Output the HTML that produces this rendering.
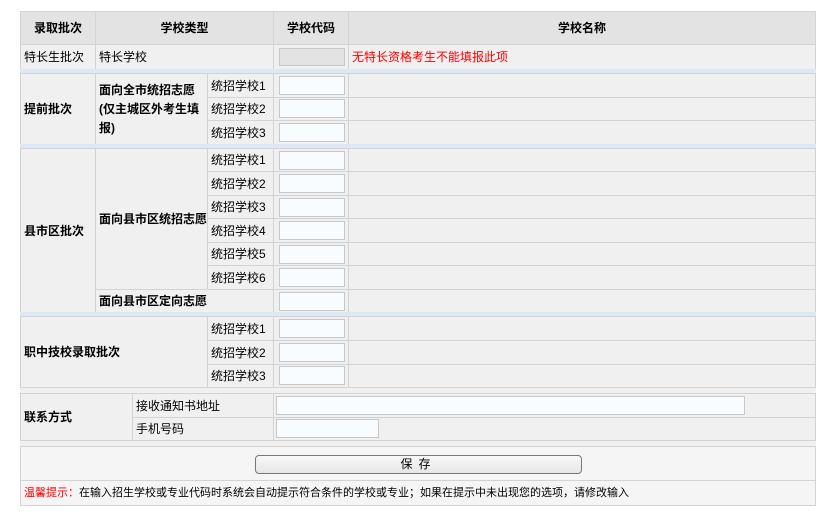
<!DOCTYPE html>
<html><head><meta charset="utf-8"><style>
body{margin:0;width:828px;height:513px;background:#fff;position:relative;overflow:hidden;font-family:"Liberation Sans","Microsoft YaHei","Noto Sans CJK SC",sans-serif;font-size:12px;color:#000}
.c{position:absolute;box-sizing:border-box;border:1px solid #d3d3d3;background:#f0f0f0;display:flex;align-items:center;padding-left:3px;line-height:18px}
.h{background:#e3e3e3;justify-content:center;padding:0;font-weight:bold}
.b{font-weight:bold}
.s{position:absolute;left:20px;width:796px;height:4px;background:#dde8f4}
.i{position:absolute;box-sizing:border-box;border:1px solid #c8c8c8;background:#f9fcff;height:19px}
</style></head><body>
<div class="c h" style="left:20px;top:11px;width:76px;height:34px">录取批次</div>
<div class="c h" style="left:95px;top:11px;width:179px;height:34px">学校类型</div>
<div class="c h" style="left:273px;top:11px;width:76px;height:34px">学校代码</div>
<div class="c h" style="left:348px;top:11px;width:468px;height:34px">学校名称</div>

<div class="c" style="left:20px;top:44px;width:76px;height:26px">特长生批次</div>
<div class="c" style="left:95px;top:44px;width:179px;height:26px">特长学校</div>
<div class="c" style="left:273px;top:44px;width:76px;height:26px"></div>
<div class="i" style="left:279px;top:48px;width:66px;height:18px;background:#e3e3e3"></div>
<div class="c" style="left:348px;top:44px;width:468px;height:26px;color:#f00">无特长资格考生不能填报此项</div>
<div class="s" style="top:69px"></div>

<div class="c b" style="left:20px;top:73px;width:76px;height:72px">提前批次</div>
<div class="c b" style="left:95px;top:73px;width:113px;height:72px;line-height:19px">面向全市统招志愿(仅主城区外考生填报)</div>
<div class="c" style="left:207px;top:73px;width:67px;height:25px">统招学校1</div>
<div class="c" style="left:207px;top:97px;width:67px;height:24px">统招学校2</div>
<div class="c" style="left:207px;top:120px;width:67px;height:25px">统招学校3</div>
<div class="c" style="left:273px;top:73px;width:76px;height:25px"></div>
<div class="c" style="left:273px;top:97px;width:76px;height:24px"></div>
<div class="c" style="left:273px;top:120px;width:76px;height:25px"></div>
<div class="c" style="left:348px;top:73px;width:468px;height:25px"></div>
<div class="c" style="left:348px;top:97px;width:468px;height:24px"></div>
<div class="c" style="left:348px;top:120px;width:468px;height:25px"></div>
<div class="i" style="left:279px;top:76px;width:66px"></div>
<div class="i" style="left:279px;top:99px;width:66px"></div>
<div class="i" style="left:279px;top:123px;width:66px"></div>
<div class="s" style="top:144px"></div>

<div class="c b" style="left:20px;top:148px;width:76px;height:165px">县市区批次</div>
<div class="c b" style="left:95px;top:148px;width:113px;height:142px">面向县市区统招志愿</div>
<div class="c b" style="left:95px;top:289px;width:179px;height:24px">面向县市区定向志愿</div>

<div class="c" style="left:207px;top:148px;width:67px;height:24px">统招学校1</div>
<div class="c" style="left:207px;top:171px;width:67px;height:25px">统招学校2</div>
<div class="c" style="left:207px;top:195px;width:67px;height:24px">统招学校3</div>
<div class="c" style="left:207px;top:218px;width:67px;height:25px">统招学校4</div>
<div class="c" style="left:207px;top:242px;width:67px;height:24px">统招学校5</div>
<div class="c" style="left:207px;top:265px;width:67px;height:25px">统招学校6</div>

<div class="c" style="left:273px;top:148px;width:76px;height:24px"></div>
<div class="c" style="left:273px;top:171px;width:76px;height:25px"></div>
<div class="c" style="left:273px;top:195px;width:76px;height:24px"></div>
<div class="c" style="left:273px;top:218px;width:76px;height:25px"></div>
<div class="c" style="left:273px;top:242px;width:76px;height:24px"></div>
<div class="c" style="left:273px;top:265px;width:76px;height:25px"></div>
<div class="c" style="left:273px;top:289px;width:76px;height:24px"></div>
<div class="c" style="left:348px;top:148px;width:468px;height:24px"></div>
<div class="c" style="left:348px;top:171px;width:468px;height:25px"></div>
<div class="c" style="left:348px;top:195px;width:468px;height:24px"></div>
<div class="c" style="left:348px;top:218px;width:468px;height:25px"></div>
<div class="c" style="left:348px;top:242px;width:468px;height:24px"></div>
<div class="c" style="left:348px;top:265px;width:468px;height:25px"></div>
<div class="c" style="left:348px;top:289px;width:468px;height:24px"></div>
<div class="i" style="left:279px;top:151px;width:66px"></div>
<div class="i" style="left:279px;top:174px;width:66px"></div>
<div class="i" style="left:279px;top:198px;width:66px"></div>
<div class="i" style="left:279px;top:221px;width:66px"></div>
<div class="i" style="left:279px;top:245px;width:66px"></div>
<div class="i" style="left:279px;top:268px;width:66px"></div>
<div class="i" style="left:279px;top:292px;width:66px"></div>
<div class="s" style="top:312px"></div>

<div class="c b" style="left:20px;top:316px;width:188px;height:72px">职中技校录取批次</div>
<div class="c" style="left:207px;top:316px;width:67px;height:25px">统招学校1</div>
<div class="c" style="left:207px;top:340px;width:67px;height:25px">统招学校2</div>
<div class="c" style="left:207px;top:364px;width:67px;height:24px">统招学校3</div>
<div class="c" style="left:273px;top:316px;width:76px;height:25px"></div>
<div class="c" style="left:273px;top:340px;width:76px;height:25px"></div>
<div class="c" style="left:273px;top:364px;width:76px;height:24px"></div>
<div class="c" style="left:348px;top:316px;width:468px;height:25px"></div>
<div class="c" style="left:348px;top:340px;width:468px;height:25px"></div>
<div class="c" style="left:348px;top:364px;width:468px;height:24px"></div>
<div class="i" style="left:279px;top:319px;width:66px"></div>
<div class="i" style="left:279px;top:343px;width:66px"></div>
<div class="i" style="left:279px;top:366px;width:66px"></div>
<div style="position:absolute;left:20px;top:388px;width:796px;height:5px;background:#f0f0f0"></div>

<div class="c b" style="left:20px;top:393px;width:113px;height:48px">联系方式</div>
<div class="c" style="left:132px;top:393px;width:142px;height:25px">接收通知书地址</div>
<div class="c" style="left:132px;top:417px;width:142px;height:24px">手机号码</div>
<div class="c" style="left:273px;top:393px;width:543px;height:25px"></div>
<div class="c" style="left:273px;top:417px;width:543px;height:24px"></div>
<div class="i" style="left:276px;top:396px;width:469px"></div>
<div class="i" style="left:276px;top:419px;width:103px"></div>
<div style="position:absolute;left:20px;top:441px;width:796px;height:5px;background:#f0f0f0"></div>

<div class="c" style="left:20px;top:446px;width:796px;height:35px;background:#f5f5f5"></div>
<div style="position:absolute;left:255px;top:455px;width:327px;height:19px;box-sizing:border-box;border:1px solid #777;border-radius:4px;background:linear-gradient(#f8f8f8,#e6e6e6);text-align:center;line-height:17px;letter-spacing:6px">保存</div>
<div class="c" style="left:20px;top:480px;width:796px;height:26px;background:#f5f5f5;font-size:11px"><span style="color:#f00">温馨提示：</span>在输入招生学校或专业代码时系统会自动提示符合条件的学校或专业；如果在提示中未出现您的选项，请修改输入</div>
</body></html>
